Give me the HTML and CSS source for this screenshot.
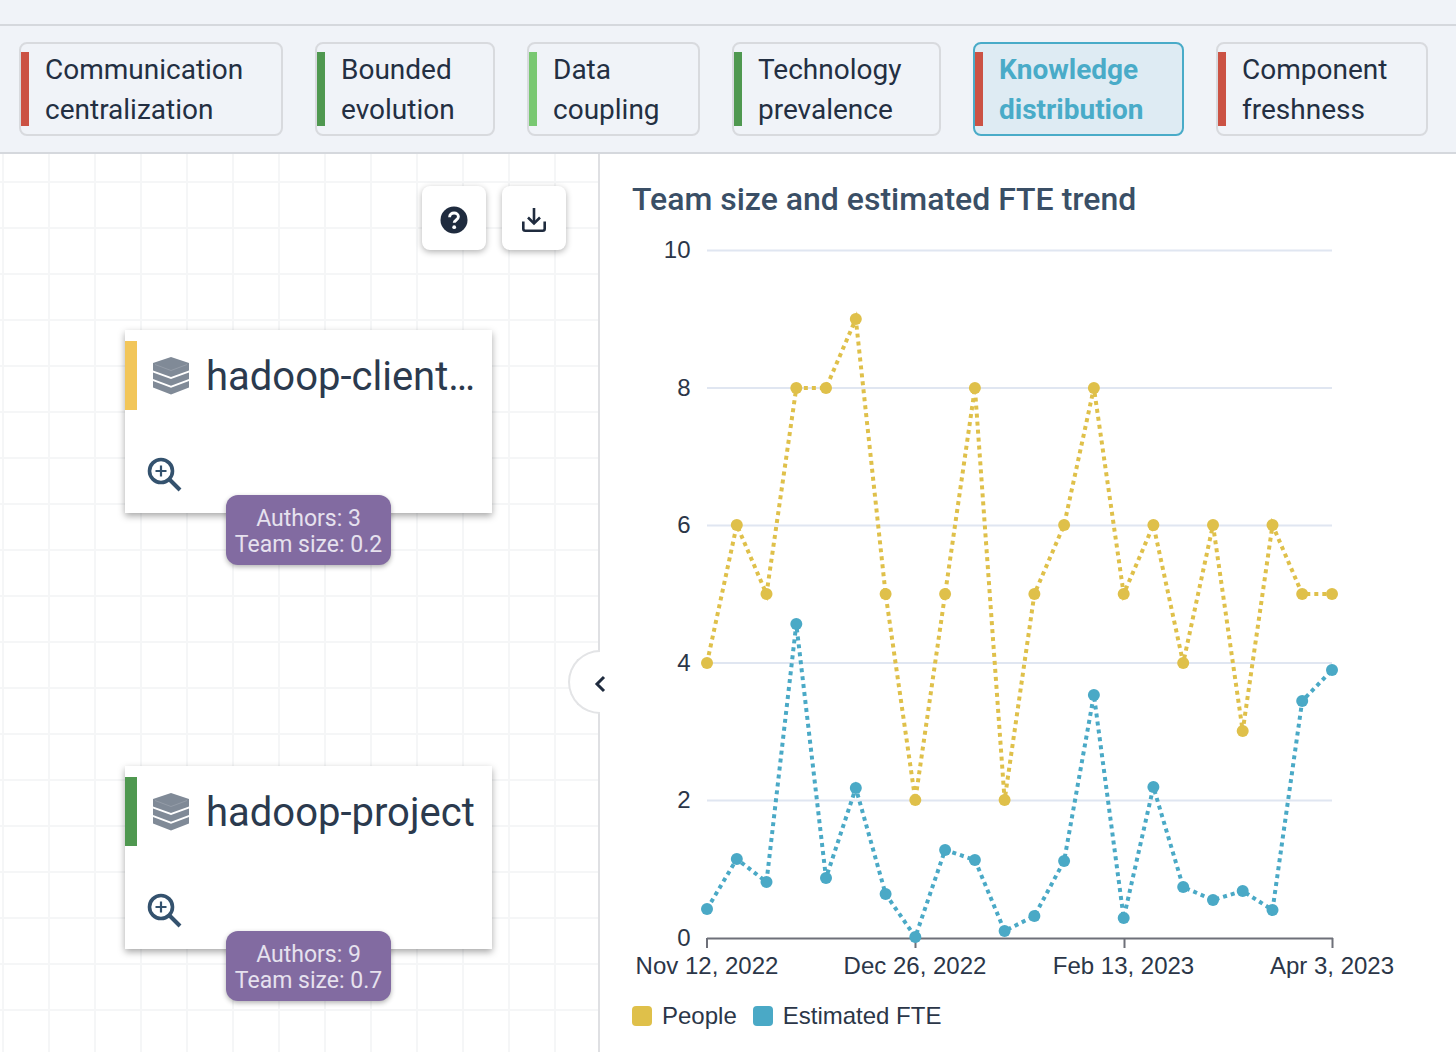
FILE: index.html
```html
<!DOCTYPE html>
<html lang="en">
<head>
  <meta charset="UTF-8">
  <meta name="viewport" content="width=device-width, initial-scale=1.0">
  <title>Knowledge distribution</title>
  <link rel="stylesheet" href="styles.css">
</head>
<body>
  <div class="top-band"></div>

  <nav class="tabs">
    <div class="tab tab-communication"><span class="tab-bar bar-red"></span><span class="tab-label">Communication<br>centralization</span></div>
    <div class="tab tab-bounded"><span class="tab-bar bar-green"></span><span class="tab-label">Bounded<br>evolution</span></div>
    <div class="tab tab-data"><span class="tab-bar bar-light-green"></span><span class="tab-label">Data<br>coupling</span></div>
    <div class="tab tab-technology"><span class="tab-bar bar-green"></span><span class="tab-label">Technology<br>prevalence</span></div>
    <div class="tab tab-knowledge active"><span class="tab-bar bar-red"></span><span class="tab-label">Knowledge<br>distribution</span></div>
    <div class="tab tab-component"><span class="tab-bar bar-red"></span><span class="tab-label">Component<br>freshness</span></div>
  </nav>

  <main class="content">
    <section class="canvas">
      <div class="canvas-tools">
        <button class="tool-button" aria-label="Help">
          <svg class="tool-icon" width="28" height="28" viewBox="0 0 28 28">
            <circle cx="14" cy="14" r="13.500" fill="#1f2b3e"/>
            <path d="M9.600 11.200c0-2.600 2-4.200 4.500-4.200 2.400 0 4.300 1.500 4.300 3.800 0 3.100-4.200 3.200-4.200 6" fill="none" stroke="#fff" stroke-width="2.900"/>
            <circle cx="14.200" cy="21.200" r="1.900" fill="#fff"/>
          </svg>
        </button>
        <button class="tool-button" aria-label="Download">
          <svg class="tool-icon" width="24" height="24" viewBox="0 0 24 24" fill="none" stroke="#1f2b3e" stroke-width="2.600">
            <path d="M12 0v15"/>
            <path d="M6 9.500l6 6 6-6"/>
            <path d="M1.300 13.500v7.200a2 2 0 0 0 2 2h17.400a2 2 0 0 0 2-2v-7.200"/>
          </svg>
        </button>
      </div>

      <div class="node node-client">
        <span class="node-bar bar-yellow"></span>
        <div class="node-head">
          <svg class="node-icon" width="38" height="38" viewBox="0 0 38 38" fill="#808a97">
            <path d="M19 0L37 6V13.500L19 20 1 13.500V6Z"/>
            <path d="M1 15.500L19 22 37 15.500V22L19 28.700 1 22Z"/>
            <path d="M1 24L19 30.700 37 24V30.500L19 37.500 1 30.500Z"/>
            <path d="M3 7.500L19 13.500 35 7.500" fill="none" stroke="#949ca7"/>
          </svg>
          <span class="node-name">hadoop-client…</span>
        </div>
        <svg class="node-zoom" width="36" height="36" viewBox="0 0 36 36" fill="none" stroke="#34526e">
          <circle cx="14" cy="14" r="11.500" stroke-width="3.600"/>
          <path d="M14 8.500v11M8.500 14h11" stroke-width="2.200"/>
          <path d="M22.500 22.500L33 33" stroke-width="4"/>
        </svg>
        <div class="node-badge">Authors: 3<br>Team size: 0.2</div>
      </div>

      <div class="node node-project">
        <span class="node-bar bar-green"></span>
        <div class="node-head">
          <svg class="node-icon" width="38" height="38" viewBox="0 0 38 38" fill="#808a97">
            <path d="M19 0L37 6V13.500L19 20 1 13.500V6Z"/>
            <path d="M1 15.500L19 22 37 15.500V22L19 28.700 1 22Z"/>
            <path d="M1 24L19 30.700 37 24V30.500L19 37.500 1 30.500Z"/>
            <path d="M3 7.500L19 13.500 35 7.500" fill="none" stroke="#949ca7"/>
          </svg>
          <span class="node-name">hadoop-project</span>
        </div>
        <svg class="node-zoom" width="36" height="36" viewBox="0 0 36 36" fill="none" stroke="#34526e">
          <circle cx="14" cy="14" r="11.500" stroke-width="3.600"/>
          <path d="M14 8.500v11M8.500 14h11" stroke-width="2.200"/>
          <path d="M22.500 22.500L33 33" stroke-width="4"/>
        </svg>
        <div class="node-badge">Authors: 9<br>Team size: 0.7</div>
      </div>

      <button class="collapse-handle" aria-label="Collapse">
        <svg class="collapse-icon" width="12" height="18" viewBox="0 0 12 18" fill="none" stroke="#1f2b3e" stroke-width="3"><path d="M10 2L3 9l7 7"/></svg>
      </button>
    </section>

    <section class="panel">
      <h2 class="panel-title">Team size and estimated FTE trend</h2>

      <!-- viewBox uses page coordinates so the points read straight off the screenshot -->
      <svg class="chart" width="856" height="746" viewBox="600 232 856 746">
        <g class="grid-lines">
          <path d="M707 250.500H1332"/>
          <path d="M707 388H1332"/>
          <path d="M707 525.500H1332"/>
          <path d="M707 663H1332"/>
          <path d="M707 800.500H1332"/>
        </g>
        <g class="axis-lines">
          <path d="M707 938.500H1333"/>
          <path d="M707 938V948M915.500 938V948M1124.500 938V948M1332.500 938V948"/>
        </g>
        <g class="y-labels">
          <text x="690.500" y="258">10</text>
          <text x="690.500" y="396">8</text>
          <text x="690.500" y="533">6</text>
          <text x="690.500" y="671">4</text>
          <text x="690.500" y="808">2</text>
          <text x="690.500" y="946">0</text>
        </g>
        <g class="x-labels">
          <text x="707" y="974">Nov 12, 2022</text>
          <text x="915" y="974">Dec 26, 2022</text>
          <text x="1123.500" y="974">Feb 13, 2023</text>
          <text x="1332" y="974">Apr 3, 2023</text>
        </g>

        <polyline class="line-people" points="707,663 736.800,525 766.500,594 796.300,388 826,388 855.800,319 885.600,594 915.300,800 945.100,594 974.900,388 1004.600,800 1034.400,594 1064.100,525 1093.900,388 1123.700,594 1153.400,525 1183.200,663 1213,525 1242.700,731 1272.500,525 1302.200,594 1332,594"/>
        <polyline class="line-fte" points="707,909 736.800,859 766.500,882 796.300,624 826,878 855.800,788 885.600,894 915.300,937 945.100,850 974.900,860 1004.600,931 1034.400,916 1064.100,861 1093.900,695 1123.700,918 1153.400,787 1183.200,887 1213,900 1242.700,891 1272.500,910 1302.200,701 1332,670"/>

        <g class="dots-people">
          <circle cx="707" cy="663" r="6"/><circle cx="736.800" cy="525" r="6"/><circle cx="766.500" cy="594" r="6"/><circle cx="796.300" cy="388" r="6"/>
          <circle cx="826" cy="388" r="6"/><circle cx="855.800" cy="319" r="6"/><circle cx="885.600" cy="594" r="6"/><circle cx="915.300" cy="800" r="6"/>
          <circle cx="945.100" cy="594" r="6"/><circle cx="974.900" cy="388" r="6"/><circle cx="1004.600" cy="800" r="6"/><circle cx="1034.400" cy="594" r="6"/>
          <circle cx="1064.100" cy="525" r="6"/><circle cx="1093.900" cy="388" r="6"/><circle cx="1123.700" cy="594" r="6"/><circle cx="1153.400" cy="525" r="6"/>
          <circle cx="1183.200" cy="663" r="6"/><circle cx="1213" cy="525" r="6"/><circle cx="1242.700" cy="731" r="6"/><circle cx="1272.500" cy="525" r="6"/>
          <circle cx="1302.200" cy="594" r="6"/><circle cx="1332" cy="594" r="6"/>
        </g>
        <g class="dots-fte">
          <circle cx="707" cy="909" r="6"/><circle cx="736.800" cy="859" r="6"/><circle cx="766.500" cy="882" r="6"/><circle cx="796.300" cy="624" r="6"/>
          <circle cx="826" cy="878" r="6"/><circle cx="855.800" cy="788" r="6"/><circle cx="885.600" cy="894" r="6"/><circle cx="915.300" cy="937" r="6"/>
          <circle cx="945.100" cy="850" r="6"/><circle cx="974.900" cy="860" r="6"/><circle cx="1004.600" cy="931" r="6"/><circle cx="1034.400" cy="916" r="6"/>
          <circle cx="1064.100" cy="861" r="6"/><circle cx="1093.900" cy="695" r="6"/><circle cx="1123.700" cy="918" r="6"/><circle cx="1153.400" cy="787" r="6"/>
          <circle cx="1183.200" cy="887" r="6"/><circle cx="1213" cy="900" r="6"/><circle cx="1242.700" cy="891" r="6"/><circle cx="1272.500" cy="910" r="6"/>
          <circle cx="1302.200" cy="701" r="6"/><circle cx="1332" cy="670" r="6"/>
        </g>
      </svg>

      <div class="legend">
        <span class="legend-item"><span class="swatch swatch-people"></span>People</span>
        <span class="legend-item"><span class="swatch swatch-fte"></span>Estimated FTE</span>
      </div>
    </section>
  </main>
</body>
</html>
```

FILE: styles.css
```css
* {
  box-sizing: border-box;
}

body {
  margin: 0;
  height: 1052px;
  overflow: hidden;
  display: flex;
  flex-direction: column;
  font-family: Roboto, sans-serif;
  color: #232f42;
  background-color: #fff;
}

.top-band {
  height: 26px;
  background-color: #f0f3f8;
  border-bottom: 2px solid #d5d8dd;
}

/* Tabs */
.tabs {
  height: 128px;
  display: flex;
  gap: 32px;
  padding: 16px 19px 0;
  background-color: #f0f3f8;
  border-bottom: 2px solid #d5d8dd;
}

.tab {
  height: 94px;
  display: flex;
  border: 2px solid #d8dade;
  border-radius: 8px;
  font-size: 28px;
  line-height: 40px;
}

.tab-communication { width: 264px; }
.tab-bounded { width: 180px; }
.tab-data { width: 173px; }
.tab-technology { width: 209px; }
.tab-knowledge { width: 211px; }
.tab-component { width: 212px; }

.tab.active {
  background-color: #deebf3;
  border-color: #49abc8;
  color: #49abc8;
  font-weight: 700;
}

.tab-bar {
  width: 8px;
  height: 74px;
  margin-top: 8px;
}

.tab-label {
  margin-left: 16px;
  padding-top: 6px;
}

.bar-red { background-color: #cb5244; }
.bar-green { background-color: #4f9850; }
.bar-light-green { background-color: #79c872; }
.bar-yellow { background-color: #f2c65a; }

/* Main area */
.content {
  flex: 1;
  display: flex;
  min-height: 0;
}

.canvas {
  position: relative;
  width: 600px;
  border-right: 2px solid #dfe0e3;
  background-color: #fff;
  background-image:
    linear-gradient(to right, #f5f6f7 2px, transparent 2px),
    linear-gradient(to bottom, #f5f6f7 2px, transparent 2px);
  background-size: 46px 46px;
  background-position: 2px 27px;
}

.canvas-tools {
  position: absolute;
  top: 32px;
  left: 422px;
  display: flex;
  gap: 16px;
}

.tool-button {
  width: 64px;
  height: 64px;
  display: flex;
  align-items: center;
  justify-content: center;
  padding: 0;
  border: none;
  border-radius: 8px;
  background-color: #fff;
  box-shadow: 0 2px 6px rgba(0, 0, 0, 0.3);
}

.tool-icon {
  margin-top: 3px;
}

/* Graph nodes */
.node {
  position: absolute;
  left: 125px;
  width: 367px;
  height: 183px;
  background-color: #fff;
  box-shadow: 0 3px 7px rgba(0, 0, 0, 0.35);
}

.node-client { top: 176px; }
.node-project { top: 612px; }

.node-bar {
  position: absolute;
  top: 11px;
  left: 0;
  width: 12px;
  height: 69px;
}

.node-head {
  display: flex;
  align-items: center;
  gap: 16px;
  padding: 24px 0 0 27px;
}

.node-name {
  position: relative;
  top: 1px;
  font-size: 40px;
  line-height: 44px;
  white-space: nowrap;
  color: #2b3a4e;
}

.node-zoom {
  display: block;
  margin: 59px 0 0 22px;
}

.node-badge {
  position: absolute;
  top: 165px;
  left: 101px;
  width: 165px;
  height: 70px;
  padding-top: 11px;
  border-radius: 12px;
  background-color: #826ba1;
  color: #e6e1ee;
  font-size: 23px;
  line-height: 26px;
  text-align: center;
  white-space: nowrap;
  box-shadow: 0 2px 5px rgba(0, 0, 0, 0.3);
}

.collapse-handle {
  position: absolute;
  top: 496px;
  left: 568px;
  width: 32px;
  height: 64px;
  display: flex;
  align-items: center;
  justify-content: flex-end;
  padding: 0;
  border: 2px solid #e3e4e6;
  border-right: none;
  border-radius: 32px 0 0 32px;
  background-color: #fff;
}

.collapse-icon {
  flex: none;
  margin: 4px -6px 0 0;
}

/* Right panel */
.panel {
  flex: 1;
  background-color: #fff;
}

.panel-title {
  margin: 0;
  padding: 26px 0 0 32px;
  font-size: 32px;
  line-height: 38px;
  font-weight: 500;
  color: #3a4f66;
}

.chart {
  display: block;
  margin-top: 14px;
}

.chart text {
  font-family: "Liberation Sans", Arial, sans-serif;
  font-size: 24px;
  fill: #2b3648;
}

.y-labels text { text-anchor: end; }
.x-labels text { text-anchor: middle; }

.grid-lines path {
  stroke: #e0e6f1;
  stroke-width: 2;
}

.axis-lines path {
  fill: none;
  stroke: #6e7079;
  stroke-width: 2;
}

.line-people,
.line-fte {
  fill: none;
  stroke-width: 4;
  stroke-dasharray: 4 4;
}

.line-people { stroke: #dfc04a; }
.line-fte { stroke: #4aa9c6; }
.dots-people { fill: #dfc04a; }
.dots-fte { fill: #4aa9c6; }

.legend {
  display: flex;
  gap: 16px;
  padding: 24px 0 0 32px;
  font-family: "Liberation Sans", Arial, sans-serif;
  font-size: 24px;
  line-height: 28px;
  color: #2b3648;
}

.legend-item {
  display: flex;
  align-items: center;
  gap: 10px;
}

.swatch {
  width: 20px;
  height: 20px;
  border-radius: 4px;
}

.swatch-people { background-color: #dfc04a; }
.swatch-fte { background-color: #4aa9c6; }
```
